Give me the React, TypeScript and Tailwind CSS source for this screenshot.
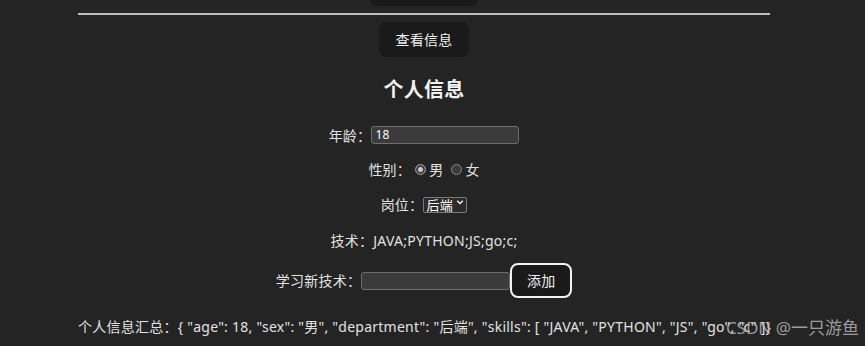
import { useState } from "react"

const FONT = "font-['Noto_Sans',_'Noto_Sans_CJK_SC',_sans-serif]"

export default function App() {
  const [sex, setSex] = useState("男")
  const skills = ["JAVA", "PYTHON", "JS", "go", "c"]
  const info = { age: 18, sex, department: "后端", skills }
  const summary = JSON.stringify(info, null, 1).replace(/\n/g, "").replace(/\s+/g, " ")

  return (
    <div className={`relative h-[346px] w-[865px] overflow-hidden bg-[#242424] text-[14px] tracking-[0.25px] text-[#e2e2e2] ${FONT}`}>
      <div className="ml-[78px] flex w-[692px] flex-col items-center">
        {/* cut-off button from the previous block */}
        <button className="-mt-[29px] h-[35px] w-[108px] rounded-lg bg-[#1a1a1a]" />

        <div className="mt-[7px] h-[2px] w-full bg-[#bdbdbd]" />

        <button className="mt-[7px] flex h-[35px] w-[90px] items-center justify-center rounded-lg bg-[#1a1a1a] text-[14px] text-[#f0f0f0]">
          查看信息
        </button>

        <h2 className="mt-[19px] h-[28px] text-[20px] font-bold leading-[28px] text-[#f2f2f2]">个人信息</h2>

        {/* 年龄 */}
        <div className="mt-[22px] flex h-[18px] items-center">
          <span>年龄：</span>
          <input
            defaultValue="18"
            className="h-[18px] w-[148px] rounded-[3px] border border-[#6e6e6e] bg-[#3b3b3b] px-[3px] text-[12px] text-white outline-none"
          />
        </div>

        {/* 性别 */}
        <div className="mt-[15px] flex h-[20px] items-center">
          <span className="mr-[4px]">性别：</span>
          {["男", "女"].map((s) => (
            <label key={s} className="mr-[8px] flex items-center last:mr-0">
              <input
                type="radio"
                name="sex"
                checked={sex === s}
                onChange={() => setSex(s)}
                className="mr-[3px] h-[11px] w-[11px] appearance-none rounded-full border border-[#8c8c8c] bg-[#3b3b3b] checked:bg-[#c9c9c9] checked:shadow-[inset_0_0_0_2px_#3b3b3b]"
              />
              <span>{s}</span>
            </label>
          ))}
        </div>

        {/* 岗位 */}
        <div className="mt-[15px] flex h-[20px] items-center">
          <span>岗位：</span>
          <div className="relative">
            <select
              defaultValue="后端"
              className="h-[16px] w-[44px] appearance-none rounded-[2px] border border-[#7a7a7a] bg-[#2b2b2b] pl-[2px] text-[13px] leading-[14px] text-white outline-none"
            >
              <option>前端</option>
              <option>后端</option>
            </select>
            <svg
              viewBox="0 0 10 10"
              className="pointer-events-none absolute right-[3px] top-[4px] h-[8px] w-[8px]"
              fill="none"
              stroke="#f0f0f0"
              strokeWidth="1.8"
            >
              <path d="M1.5 3.5 5 7l3.5-3.5" />
            </svg>
          </div>
        </div>

        {/* 技术 */}
        <div className="mt-[16px] flex h-[20px] items-center">
          <span>技术：</span>
          <span>{skills.map((s) => s + ";").join("")}</span>
        </div>

        {/* 学习新技术 */}
        <div className="mt-[13px] flex h-[35px] items-center">
          <span>学习新技术：</span>
          <input className="h-[18px] w-[149px] rounded-[3px] border border-[#6e6e6e] bg-[#3b3b3b] px-[3px] text-[12px] text-white outline-none" />
          <button className="flex h-[35px] w-[62px] items-center justify-center rounded-lg border-2 border-[#f2f2f2] bg-[#1a1a1a] text-[14px] text-[#f0f0f0]">
            添加
          </button>
        </div>

        {/* 汇总 */}
        <div className="mt-[18px] flex h-[20px] w-full items-center whitespace-nowrap">
          个人信息汇总：{summary}
        </div>
      </div>

      {/* watermark */}
      <div className="absolute bottom-[8px] right-[6px] text-[17px] leading-[20px] tracking-normal text-[#bdbdbd]/80">
        CSDN @一只游鱼
      </div>
    </div>
  )
}
